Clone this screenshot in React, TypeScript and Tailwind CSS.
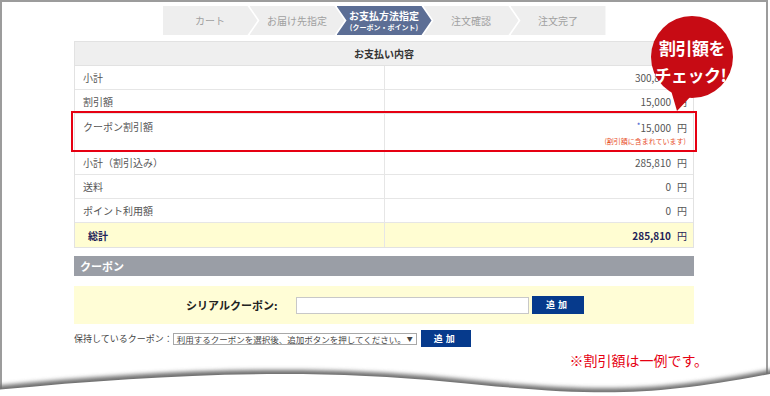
import React from 'react';

const jp = { fontFamily: '"Noto Sans CJK JP", "Noto Sans", sans-serif' };

type Step = { label: string; sub?: string; active?: boolean };

const steps: Step[] = [
  { label: 'カート' },
  { label: 'お届け先指定' },
  { label: 'お支払方法指定', sub: '(クーポン・ポイント)', active: true },
  { label: '注文確認' },
  { label: '注文完了' },
];

const clips = [
  '[clip-path:polygon(0_0,calc(100%_-_10px)_0,100%_50%,calc(100%_-_10px)_100%,0_100%)]',
  '[clip-path:polygon(0_0,calc(100%_-_10px)_0,100%_50%,calc(100%_-_10px)_100%,0_100%,10px_50%)]',
  '[clip-path:polygon(0_0,100%_0,100%_100%,0_100%,10px_50%)]',
];

const StepBar: React.FC = () => (
  <div className="flex justify-center">
    {steps.map((s, i) => {
      const clip = i === 0 ? clips[0] : i === steps.length - 1 ? clips[2] : clips[1];
      return (
        <div
          key={s.label}
          className={`${clip} ${i > 0 ? '-ml-[8px]' : ''} w-[95px] h-[29px] flex flex-col items-center justify-center ${
            s.active ? 'bg-[#5c6e95] text-white font-bold' : 'bg-[#eeeeee] text-[#a0a0a0]'
          }`}
        >
          <span className="text-[10px] leading-[12px]">{s.label}</span>
          {s.sub && <span className="text-[7px] leading-[10px]">{s.sub}</span>}
        </div>
      );
    })}
  </div>
);

type Row = { label: string; value: string; tall?: boolean; total?: boolean };

const rows: Row[] = [
  { label: '小計', value: '300,810' },
  { label: '割引額', value: '15,000' },
  { label: 'クーポン割引額', value: '15,000', tall: true },
  { label: '小計（割引込み）', value: '285,810' },
  { label: '送料', value: '0' },
  { label: 'ポイント利用額', value: '0' },
  { label: '総計', value: '285,810', total: true },
];

const SummaryTable: React.FC = () => (
  <div className="border border-[#e2e2e2] text-[10px] text-[#555]">
    <div className="h-[24px] bg-[#efefef] flex items-center justify-center font-bold text-[#333] border-b border-[#e2e2e2]">
      お支払い内容
    </div>
    {rows.map((r) => (
      <div
        key={r.label}
        className={`flex border-b last:border-b-0 border-[#e6e6e6] ${r.tall ? 'h-[37px]' : 'h-[24px]'} ${
          r.total ? 'bg-[#fffdd2] text-[#1e2259] font-bold' : ''
        }`}
      >
        <div className={`w-[310px] border-r border-[#e6e6e6] flex ${r.tall ? 'items-start pt-[5px]' : 'items-center'} ${r.total ? 'pl-[13px]' : 'pl-[8px]'}`}>
          {r.label}
        </div>
        <div className={`flex-1 flex flex-col items-end pr-[6px] ${r.tall ? 'pt-[6px]' : 'justify-center'}`}>
          <div>
            {r.tall && <span className="text-[#3355cc] text-[8px] align-top">*</span>}
            {r.value}
            <span className="ml-[6px] font-normal">円</span>
          </div>
          {r.tall && (
            <div className="text-[7px] text-[#e8502a] mt-[1px] mr-[1px]">(割引額に含まれています)</div>
          )}
        </div>
      </div>
    ))}
  </div>
);

const Bubble: React.FC = () => (
  <div className="absolute left-[646px] top-[15px] w-[92px] h-[100px]">
    <svg width="92" height="100" viewBox="0 0 92 100" className="absolute left-0 top-0">
      <path d="M24 72 L31 96 L46 80 Z" fill="#c70b14" />
      <circle cx="46" cy="42" r="41" fill="#c70b14" />
    </svg>
    <div className="absolute left-0 top-[19px] w-[92px] text-center text-white font-bold text-[17px] leading-[27px] whitespace-nowrap tracking-[-0.5px]">
      <div>割引額を</div>
      <div className="-ml-[3px]">チェック!</div>
    </div>
  </div>
);

const Wave: React.FC = () => (
  <svg width="770" height="50" viewBox="0 0 770 50" className="absolute left-0 bottom-0">
    <defs>
      <filter id="blur" x="-5%" y="-50%" width="110%" height="200%">
        <feGaussianBlur stdDeviation="2" />
      </filter>
    </defs>
    <path
      d="M-5 40 C 150 25 300 17 450 32 S 650 47 775 23 L 775 50 L -5 50 Z"
      fill="#6e6e6e"
      filter="url(#blur)"
    />
    <path d="M-5 44 C 150 29 300 21 450 36 S 650 51 775 27 L 775 50 L -5 50 Z" fill="#ffffff" />
  </svg>
);

export default function App() {
  return (
    <div className="relative w-[770px] h-[396px] bg-white overflow-hidden" style={jp}>
      <div className="w-[768px] h-full border-2 border-b-0 border-[#9c9c9c]">
        <div className="ml-[72px] w-[620px] pt-[4px]">
          <StepBar />
          <div className="mt-[6px]">
            <SummaryTable />
          </div>
          <div className="mt-[8px] h-[20px] bg-[#9a9ea6] text-white font-bold text-[11px] flex items-center pl-[6px]">
            クーポン
          </div>
          <div className="mt-[10px] h-[38px] bg-[#fffdd6] flex items-center">
            <div className="ml-[112px] w-[110px] text-[11px] font-bold text-[#222]">シリアルクーポン:</div>
            <div className="w-[233px] h-[17px] bg-white border border-[#c8c8c8]" />
            <div className="ml-[3px] w-[52px] h-[18px] bg-[#063a8c] text-white text-[9px] font-bold flex items-center justify-center tracking-[3px]">
              追加
            </div>
          </div>
          <div className="mt-[6px] flex items-center text-[9px] text-[#444]">
            <span className="whitespace-nowrap">保持しているクーポン：</span>
            <div className="w-[244px] h-[12px] border border-[#a8a8a8] flex items-center justify-between px-[3px] text-[8.5px] leading-[10px] whitespace-nowrap">
              <span>利用するクーポンを選択後、追加ボタンを押してください。</span>
              <span className="text-[6px]">▼</span>
            </div>
            <div className="ml-[4px] w-[50px] h-[17px] bg-[#063a8c] text-white font-bold flex items-center justify-center tracking-[3px]">
              追加
            </div>
          </div>
          <div className="mt-[4px] -mr-[14px] flex justify-end text-[14px] text-[#e60012] leading-[18px]">
            ※割引額は一例です。
          </div>
        </div>
      </div>
      <div className="absolute left-[71px] top-[111px] w-[626px] h-[41px] border-2 border-[#e60012]" />
      <Bubble />
      <Wave />
    </div>
  );
}
